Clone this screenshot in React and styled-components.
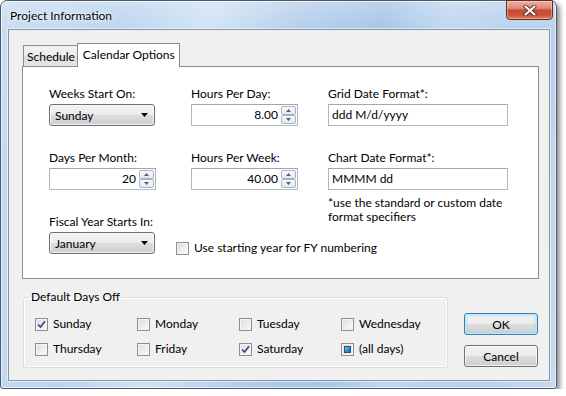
import React from 'react';
import styled, { createGlobalStyle, css } from 'styled-components';

const GlobalStyle = createGlobalStyle`
  html, body {
    margin: 0;
    padding: 0;
    background: #fff;
  }
  body {
    font-family: Lato, "Noto Sans", sans-serif;
    font-size: 12px;
    color: #000;
  }
  * {
    box-sizing: border-box;
  }
`;

const Window = styled.div`
  width: 557px;
  height: 389px;
  display: flex;
  flex-direction: column;
  border: 1px solid #4c5a6b;
  border-radius: 7px 7px 3px 3px;
  background:
    linear-gradient(180deg, rgba(255, 255, 255, 0.25) 0px, rgba(255, 255, 255, 0) 30px),
    linear-gradient(100deg, #c9ddf3 0%, #bcd5ef 20%, #d0e3f6 34%, #b6cfeb 48%, #a6c5e8 62%, #bfd7f0 72%, #b7d0ec 86%, #c6daf0 100%);
  box-shadow: inset 0 0 0 1px rgba(255, 255, 255, 0.6), 3px 3px 5px rgba(0, 0, 0, 0.45);
`;

const TitleBar = styled.div`
  height: 28px;
  display: flex;
  align-items: flex-start;
`;

const Title = styled.div`
  padding: 7px 0 0 9px;
  line-height: 16px;
  text-shadow: 0 0 6px rgba(255, 255, 255, 0.95), 0 0 2px rgba(255, 255, 255, 0.9);
`;

const CloseButton = styled.div`
  margin-left: auto;
  margin-right: 3px;
  margin-top: -1px;
  width: 47px;
  height: 20px;
  display: flex;
  align-items: center;
  justify-content: center;
  border: 1px solid #6b2a1e;
  border-radius: 0 0 4px 4px;
  background: linear-gradient(180deg, #eab0a3 0%, #dc8c79 40%, #c64a30 52%, #c9543a 78%, #dd8060 100%);
  box-shadow: inset 0 0 0 1px rgba(255, 255, 255, 0.35);
`;

const Client = styled.div`
  flex: 1;
  margin: 0 6px 7px 7px;
  border: 1px solid #8595a8;
  background: #f0f0f0;
  display: flex;
  flex-direction: column;
  padding: 13px 10px 0 13px;
  box-shadow: 0 0 0 1px rgba(255, 255, 255, 0.55);
`;

const TabRow = styled.div`
  height: 24px;
  margin-bottom: -1px;
  padding-left: 1px;
  display: flex;
  align-items: flex-end;
  position: relative;
  z-index: 1;
`;

const Tab = styled.div`
  height: 21px;
  margin-bottom: 1px;
  padding: 0 2px 0 3px;
  display: flex;
  align-items: center;
  border: 1px solid #898c95;
  border-bottom: none;
  background: linear-gradient(180deg, #f3f3f3 0%, #ebebeb 50%, #dedede 50%, #e5e5e5 100%);

  ${(p) =>
    p.$active &&
    css`
      height: 24px;
      margin-bottom: 0;
      margin-left: -1px;
      padding: 0 4px 2px 5px;
      background: #fff;
    `}
`;

const Panel = styled.div`
  height: 213px;
  border: 1px solid #898c95;
  background: #fff;
  padding: 19px 0 0 26px;
  display: flex;
`;

const Column = styled.div`
  width: ${(p) => p.$width || 'auto'};
  flex: ${(p) => (p.$width ? 'none' : 1)};
  display: flex;
  flex-direction: column;
  gap: 24px;
`;

const Field = styled.div`
  display: flex;
  flex-direction: column;
`;

const Label = styled.div`
  line-height: 16px;
  margin-bottom: 2px;
`;

const Select = styled.div`
  width: 106px;
  height: 22px;
  display: flex;
  align-items: center;
  padding: 0 5px;
  border: 1px solid #707070;
  border-radius: 3px;
  background: linear-gradient(180deg, #f2f2f2 0%, #ebebeb 50%, #dddddd 51%, #cfcfcf 100%);
  box-shadow: inset 0 0 0 1px rgba(255, 255, 255, 0.7);

  span {
    flex: 1;
  }
`;

const TextBox = styled.div`
  width: ${(p) => p.$width};
  height: 22px;
  display: flex;
  align-items: stretch;
  border: 1px solid #b4b7bd;
  border-top-color: #a3a6ad;
  background: #fff;
`;

const TextValue = styled.div`
  flex: 1;
  line-height: 20px;
  padding: 0 3px;
  text-align: ${(p) => (p.$right ? 'right' : 'left')};
`;

const SpinButtons = styled.div`
  width: 16px;
  padding: 1px 1px 1px 0;
  display: flex;
  flex-direction: column;
`;

const SpinArrow = styled.div`
  flex: 1;
  display: flex;
  align-items: center;
  justify-content: center;
  border: 1px solid #a9b3c1;
  border-radius: 2px;
  background: linear-gradient(180deg, #f7f9fb 0%, #e4e9ef 100%);
`;

const Note = styled.div`
  margin-top: 6px;
  line-height: 14px;
`;

const CheckRow = styled.label`
  display: flex;
  align-items: center;
  gap: 5px;
  line-height: 16px;
  ${(p) =>
    p.$offset &&
    css`
      margin-top: 26px;
      margin-left: -15px;
      white-space: nowrap;
    `}
`;

const Box = styled.span`
  width: 13px;
  height: 13px;
  flex: none;
  display: flex;
  align-items: center;
  justify-content: center;
  border: 1px solid #8e8f8f;
  background: linear-gradient(135deg, #dcdcdc 0%, #eeeeee 55%, #fbfbfb 100%);
  box-shadow: inset 0 0 0 1px #f4f4f4;
`;

const Mixed = styled.span`
  width: 7px;
  height: 7px;
  border: 1px solid #1c5180;
  background: linear-gradient(135deg, #7cc0ea 0%, #3b8ccb 55%, #1e64a0 100%);
`;

const Bottom = styled.div`
  flex: 1;
  display: flex;
  align-items: flex-start;
  padding-top: 10px;
`;

const GroupBox = styled.fieldset`
  margin: 0 0 0 1px;
  width: 425px;
  height: 79px;
  padding: 0;
  border: 1px solid #d5dfe5;
  border-radius: 3px;
  box-shadow: inset 0 0 0 1px #fff;
`;

const Legend = styled.legend`
  margin-left: 5px;
  padding: 0 2px;
  line-height: 16px;
`;

const DaysGrid = styled.div`
  display: grid;
  grid-template-columns: repeat(4, 102px);
  row-gap: 9px;
  padding: 11px 0 0 11px;
`;

const ButtonStack = styled.div`
  width: 74px;
  margin: 24px 1px 0 auto;
  display: flex;
  flex-direction: column;
  gap: 10px;
`;

const Button = styled.div`
  height: 22px;
  display: flex;
  align-items: center;
  justify-content: center;
  border: 1px solid #707070;
  border-radius: 3px;
  background: linear-gradient(180deg, #f2f2f2 0%, #ebebeb 50%, #dddddd 51%, #cfcfcf 100%);
  box-shadow: inset 0 0 0 1px rgba(255, 255, 255, 0.75);

  ${(p) =>
    p.$default &&
    css`
      border-color: #3c7fb1;
      box-shadow: inset 0 0 0 1px #bfe6f9, inset 0 0 2px 2px rgba(150, 215, 245, 0.5);
    `}
`;

const Arrow = () => (
  <svg width="8" height="4" viewBox="0 0 8 4">
    <path d="M0 0 H7 L3.5 4 Z" fill="#000" />
  </svg>
);

const SpinTriangle = ({ up }) => (
  <svg width="5" height="3" viewBox="0 0 5 3">
    <path d={up ? 'M0 3 H5 L2.5 0 Z' : 'M0 0 H5 L2.5 3 Z'} fill="#4d6185" />
  </svg>
);

const Tick = () => (
  <svg width="9" height="9" viewBox="0 0 9 9">
    <path d="M1 4.5 L3.5 7 L8 1.2" fill="none" stroke="#34468c" strokeWidth="1.7" />
  </svg>
);

const Checkbox = ({ checked, mixed, children, offset }) => (
  <CheckRow $offset={offset}>
    <Box>
      {checked && <Tick />}
      {mixed && <Mixed />}
    </Box>
    {children}
  </CheckRow>
);

const Spin = ({ value }) => (
  <TextBox $width="107px">
    <TextValue $right>{value}</TextValue>
    <SpinButtons>
      <SpinArrow>
        <SpinTriangle up />
      </SpinArrow>
      <SpinArrow>
        <SpinTriangle />
      </SpinArrow>
    </SpinButtons>
  </TextBox>
);

const Combo = ({ value }) => (
  <Select>
    <span>{value}</span>
    <Arrow />
  </Select>
);

const days = [
  { name: 'Sunday', checked: true },
  { name: 'Monday' },
  { name: 'Tuesday' },
  { name: 'Wednesday' },
  { name: 'Thursday' },
  { name: 'Friday' },
  { name: 'Saturday', checked: true },
  { name: '(all days)', mixed: true },
];

export default function App() {
  return (
    <>
      <GlobalStyle />
      <Window>
        <TitleBar>
          <Title>Project Information</Title>
          <CloseButton>
            <svg width="14" height="11" viewBox="0 0 14 11">
              <path d="M2.5 1.5 L11.5 9.5 M11.5 1.5 L2.5 9.5" stroke="#5a2a22" strokeWidth="4" strokeLinecap="round" />
              <path d="M2.5 1.5 L11.5 9.5 M11.5 1.5 L2.5 9.5" stroke="#fff" strokeWidth="2.2" strokeLinecap="round" />
            </svg>
          </CloseButton>
        </TitleBar>
        <Client>
          <TabRow>
            <Tab>Schedule</Tab>
            <Tab $active>Calendar Options</Tab>
          </TabRow>
          <Panel>
            <Column $width="142px">
              <Field>
                <Label>Weeks Start On:</Label>
                <Combo value="Sunday" />
              </Field>
              <Field>
                <Label>Days Per Month:</Label>
                <Spin value="20" />
              </Field>
              <Field>
                <Label>Fiscal Year Starts In:</Label>
                <Combo value="January" />
              </Field>
            </Column>
            <Column $width="137px">
              <Field>
                <Label>Hours Per Day:</Label>
                <Spin value="8.00" />
              </Field>
              <Field>
                <Label>Hours Per Week:</Label>
                <Spin value="40.00" />
              </Field>
              <Checkbox offset>Use starting year for FY numbering</Checkbox>
            </Column>
            <Column>
              <Field>
                <Label>Grid Date Format*:</Label>
                <TextBox $width="180px">
                  <TextValue>ddd M/d/yyyy</TextValue>
                </TextBox>
              </Field>
              <Field>
                <Label>Chart Date Format*:</Label>
                <TextBox $width="180px">
                  <TextValue>MMMM dd</TextValue>
                </TextBox>
                <Note>
                  *use the standard or custom date
                  <br />
                  format specifiers
                </Note>
              </Field>
            </Column>
          </Panel>
          <Bottom>
            <GroupBox>
              <Legend>Default Days Off</Legend>
              <DaysGrid>
                {days.map((d) => (
                  <Checkbox key={d.name} checked={d.checked} mixed={d.mixed}>
                    {d.name}
                  </Checkbox>
                ))}
              </DaysGrid>
            </GroupBox>
            <ButtonStack>
              <Button $default>OK</Button>
              <Button>Cancel</Button>
            </ButtonStack>
          </Bottom>
        </Client>
      </Window>
    </>
  );
}
